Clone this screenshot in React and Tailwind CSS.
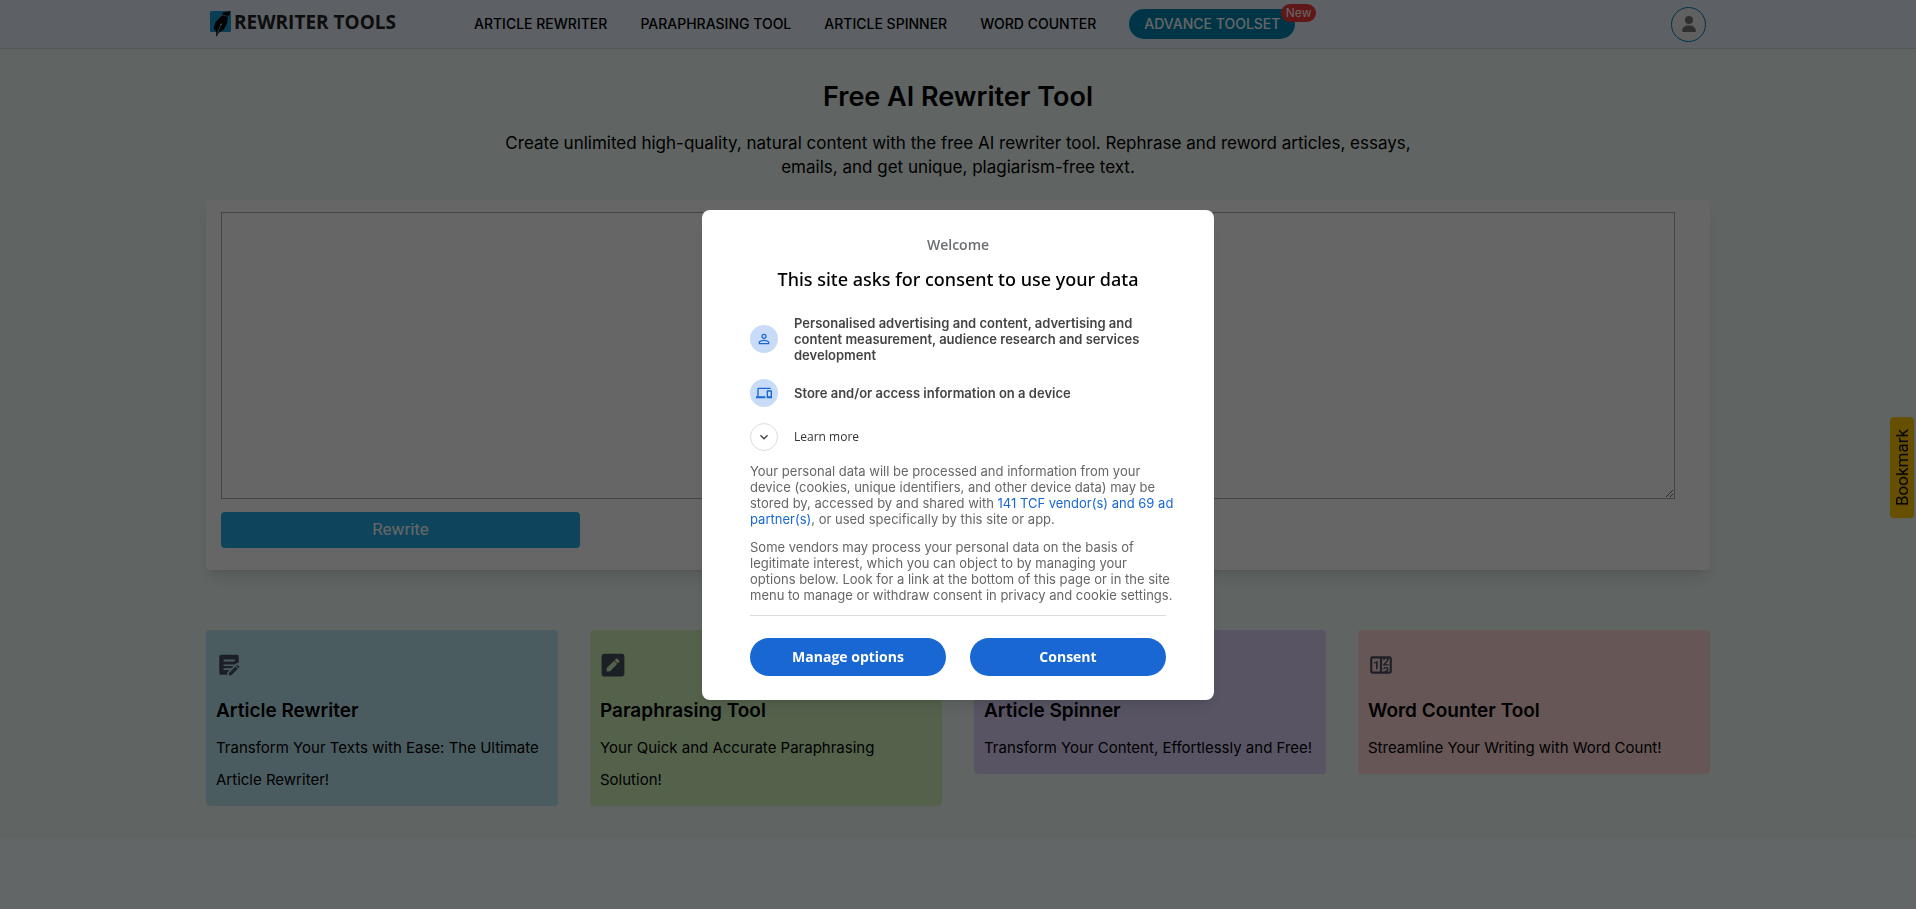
import { FaPenSquare } from "react-icons/fa";
import { FaUser } from "react-icons/fa6";
import { MdDevices, MdPersonOutline, MdKeyboardArrowDown } from "react-icons/md";

const navLinks = ["ARTICLE REWRITER", "PARAPHRASING TOOL", "ARTICLE SPINNER", "WORD COUNTER"];

const tools = [
  {
    title: "Article Rewriter",
    text: "Transform Your Texts with Ease: The Ultimate Article Rewriter!",
    color: "bg-[#bbe6f0]",
    icon: NoteEditIcon,
  },
  {
    title: "Paraphrasing Tool",
    text: "Your Quick and Accurate Paraphrasing Solution!",
    color: "bg-[#d2f5be]",
    icon: FaPenSquare,
  },
  {
    title: "Article Spinner",
    text: "Transform Your Content, Effortlessly and Free!",
    color: "bg-[#dcd2fa]",
    icon: NoteEditIcon,
  },
  {
    title: "Word Counter Tool",
    text: "Streamline Your Writing with Word Count!",
    color: "bg-[#ffd6d6]",
    icon: CounterIcon,
  },
];

function NoteEditIcon({ className }) {
  return (
    <svg viewBox="0 0 24 24" className={className} fill="currentColor" aria-hidden="true">
      <path
        fillRule="evenodd"
        d="M4.500 2.500H19.500A1.500 1.500 0 0 1 21 4V9.600L18.900 10.400L17.500 11.800V11.500H7V13H16.300L14.300 15H7V16.500H12.800L10.500 18.800V21H4.500A1.500 1.500 0 0 1 3 19.500V4A1.500 1.500 0 0 1 4.500 2.500ZM7 7V8.700H17.500V7Z"
      />
      <path d="M12 19.400V21.500H14.200L20.100 15.600L17.900 13.400ZM21.800 13.900L19.600 11.700L18.600 12.700L20.800 14.900Z" />
    </svg>
  );
}

function CounterIcon({ className }) {
  return (
    <svg viewBox="0 0 24 24" className={className} fill="currentColor" aria-hidden="true">
      <path d="M4,4H20A2,2 0 0,1 22,6V18A2,2 0 0,1 20,20H4A2,2 0 0,1 2,18V6A2,2 0 0,1 4,4M4,6V18H11V6H4M20,18V6H18.76C19,6.54 18.95,7.07 18.95,7.13C18.88,7.8 18.41,8.5 18.24,8.75L15.91,11.3L19.23,11.28L19.24,12.5L14.04,12.47L14,11.47C14,11.47 17.05,8.24 17.2,7.95C17.34,7.67 17.91,6 16.5,6C15.27,6.05 15.41,7.3 15.41,7.3L13.87,7.31C13.87,7.31 13.88,6.65 14.25,6H13V18H15.58L15.57,17.14L16.54,17.13C16.54,17.13 17.45,16.97 17.46,16.08C17.5,15.08 16.65,15.08 16.5,15.08C16.37,15.08 15.43,15.13 15.43,15.95H13.91C13.91,15.95 13.95,13.89 16.5,13.89C19.1,13.89 18.96,15.91 18.96,15.91C18.96,15.91 19,17.16 17.85,17.63L18.37,18H20M8.92,16H7.42V10.2L5.62,10.76V9.53L8.76,8.41H8.92V16Z" />
    </svg>
  );
}

function Logo() {
  return (
    <a href="#" className="flex items-center gap-[3px]">
      <svg viewBox="0 0 21 26" className="w-[21px] h-[26px]" aria-hidden="true">
        <rect x="0" y="0" width="21" height="21" rx="1.500" fill="#1b9cd8" />
        <path d="M13 1.500L20.500 0L19.600 3.600L18 5.800L17 12.500L14 18.500L8.500 22L6.500 26L5.800 20L3.600 17.500L5.200 11.500L12 4.500Z" fill="#0a0a0a" />
        <path d="M6.900 23L10.700 14.500" stroke="#8fb9cc" strokeWidth="0.700" />
        <circle cx="11" cy="13.500" r="1" fill="#8fb9cc" />
        <path d="M12 4L18.400 5.400" stroke="#8fb9cc" strokeWidth="0.600" />
      </svg>
      <span className="font-['Open_Sans',sans-serif] font-bold text-[19px] leading-5 text-[#222] mb-[5px]">REWRITER TOOLS</span>
    </a>
  );
}

function Header() {
  return (
    <header className="bg-[#e8f0fc] border-b border-[#d2dce0]">
      <div className="max-w-screen-2xl mx-auto px-5 h-12 flex items-center">
        <Logo />
        <nav className="flex items-center gap-[33px] ml-[78px] text-sm font-medium text-black">
          {navLinks.map((link) => (
            <a key={link} href="#">{link}</a>
          ))}
          <a href="#" className="relative bg-[#0086b3] text-white rounded-full h-[30px] px-[15px] flex items-center">
            ADVANCE TOOLSET
            <span className="absolute -top-[5px] -right-[21px] bg-[#f03a3a] rounded-full h-[18px] px-[5px] text-xs font-normal leading-[18px]">New</span>
          </a>
        </nav>
        <button aria-label="Account" className="ml-auto w-[35px] h-[35px] rounded-full border border-[#0086b3] bg-[#f0f0f0] flex items-center justify-center">
          <FaUser className="w-4 h-4 text-[#777]" />
        </button>
      </div>
    </header>
  );
}

function ToolCard({ tool }) {
  const Icon = tool.icon;
  return (
    <a href="#" className={`block rounded px-[10px] pt-[22px] pb-[10px] text-black ${tool.color}`}>
      <Icon className="w-[26px] h-[26px] text-[#4a4f60]" />
      <h3 className="mt-[19px] text-[19px] leading-7 font-semibold">{tool.title}</h3>
      <p className="mt-[7px] text-[15px] leading-8">{tool.text}</p>
    </a>
  );
}

function ConsentDialog() {
  return (
    <div className="fixed inset-0 z-20 bg-black/60 flex items-center justify-center">
      <div role="dialog" aria-modal="true" aria-labelledby="consent-title" className="w-[512px] bg-white rounded-lg shadow-lg px-12 pt-[25px] pb-6">
        <p className="text-center font-['Open_Sans',sans-serif] text-sm font-semibold text-[#6b6e72]">Welcome</p>
        <h2 id="consent-title" className="mt-[10px] text-center font-['Noto_Sans',sans-serif] text-lg font-medium text-black">
          This site asks for consent to use your data
        </h2>

        <div className="mt-[22px] flex items-center gap-4">
          <span className="w-7 h-7 shrink-0 rounded-full bg-[#c8dcf8] flex items-center justify-center">
            <MdPersonOutline className="w-4 h-4 text-[#1967d2]" />
          </span>
          <p className="text-[13px] leading-4 font-semibold text-[#444]">
            Personalised advertising and content, advertising and content measurement, audience research and services development
          </p>
        </div>
        <div className="mt-4 flex items-center gap-4">
          <span className="w-7 h-7 shrink-0 rounded-full bg-[#c8dcf8] flex items-center justify-center">
            <MdDevices className="w-4 h-4 text-[#1967d2]" />
          </span>
          <p className="text-[13px] leading-4 font-semibold text-[#444]">Store and/or access information on a device</p>
        </div>
        <button className="mt-4 flex items-center gap-4">
          <span className="w-7 h-7 shrink-0 rounded-full border border-[#dadce0] flex items-center justify-center">
            <MdKeyboardArrowDown className="w-4 h-4 text-[#444]" />
          </span>
          <span className="font-['Open_Sans',sans-serif] text-xs text-[#333]">Learn more</span>
        </button>

        <div className="mt-3 -mr-4 flex flex-col gap-3 text-[13px] leading-4 text-[#666]">
          <p>
            Your personal data will be processed and information from your device (cookies, unique identifiers, and other
            device data) may be stored by, accessed by and shared with{" "}
            <a href="#" className="text-[#1967d2]">141 TCF vendor(s) and 69 ad partner(s)</a>, or used specifically by this site or app.
          </p>
          <p>
            Some vendors may process your personal data on the basis of legitimate interest, which you can object to by
            managing your
            <br />
            options below. Look for a link at the bottom of this page or in the site menu to manage or
            withdraw consent in privacy and cookie settings.
          </p>
        </div>

        <div className="mt-3 pt-[22px] border-t border-[#dadce0] grid grid-cols-2 gap-6 font-['Open_Sans',sans-serif] text-sm font-bold text-white">
          <button className="h-[38px] rounded-full bg-[#1967d2]">Manage options</button>
          <button className="h-[38px] rounded-full bg-[#1967d2]">Consent</button>
        </div>
      </div>
    </div>
  );
}

export default function App() {
  return (
    <div className="min-h-screen bg-[#f5ffff] font-['Inter',sans-serif]">
      <Header />
      <main className="bg-[#f0fbf7] pb-8">
        <div className="max-w-screen-2xl mx-auto px-4">
          <h1 className="pt-8 text-center text-[27px] leading-8 font-semibold text-black">Free AI Rewriter Tool</h1>
          <p className="mt-[18px] mx-auto max-w-[920px] text-center text-[17px] leading-6 text-black">
            Create unlimited high-quality, natural content with the free AI rewriter tool. Rephrase and reword articles, essays, emails, and get unique, plagiarism-free text.
          </p>

          <section className="mt-[21px] bg-white rounded shadow-lg pl-[15px] pr-[35px] pt-3 pb-[22px]">
            <textarea aria-label="Your text" className="block w-full h-[287px] border border-[#aaa] bg-white p-2 resize" />
            <button className="mt-[13px] w-[359px] max-w-full h-9 rounded bg-[#26ade6] text-white text-[17px] font-['Roboto',sans-serif]">
              Rewrite
            </button>
          </section>

          <section className="mt-[60px] grid grid-cols-4 gap-8 items-start">
            {tools.map((tool) => (
              <ToolCard key={tool.title} tool={tool} />
            ))}
          </section>
        </div>
      </main>

      <button className="fixed right-[2px] top-[417px] z-10 rounded bg-[#ffc800] text-black font-['Roboto',sans-serif] text-[17px] leading-6 px-3 py-0 [writing-mode:vertical-rl] rotate-180">
        Bookmark
      </button>

      <ConsentDialog />
    </div>
  );
}
